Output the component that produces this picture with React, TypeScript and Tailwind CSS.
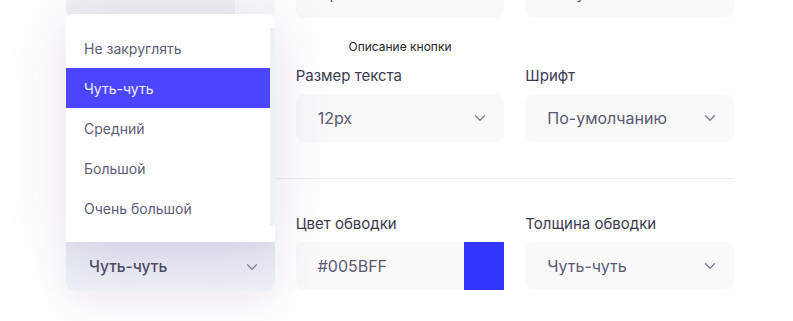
import React from "react";

const Chevron = ({ className = "" }: { className?: string }) => (
  <svg width="12" height="8" viewBox="0 0 12 8" fill="none" className={className}>
    <path d="M1.5 1.75L6 6.25L10.5 1.75" stroke="currentColor" strokeWidth="1.3" strokeLinecap="round" strokeLinejoin="round" />
  </svg>
);

const Select = ({ value }: { value: string }) => (
  <div className="h-12 rounded-lg bg-[#f9f9fa] flex items-center justify-between pl-[22px] pr-[18px]">
    <span className="text-[16px] text-[#5b5a74]">{value}</span>
    <Chevron className="text-[#7d7c92]" />
  </div>
);

const Label = ({ children }: { children: React.ReactNode }) => (
  <div className="h-5 leading-5 text-[15px] text-[#3b3a4f] mb-2">{children}</div>
);

const items = ["Не закруглять", "Чуть-чуть", "Средний", "Большой", "Очень большой"];

export default function App() {
  return (
    <div className="relative w-[793px] h-[321px] overflow-hidden bg-white font-['Inter',sans-serif]">
      <div className="mt-[-30px] ml-[66px] w-[668px]">
        {/* Row A */}
        <div className="grid grid-cols-3 gap-x-[21px]">
          <div className="h-12 flex rounded-b-lg overflow-hidden">
            <div className="flex-1 bg-[#f0f0f3]" />
            <div className="w-10 bg-[#f8f8fa] border-l border-[#fbfbfc]" />
          </div>
          <div className="h-12 rounded-lg bg-[#f9f9fa] flex items-center pl-[22px] overflow-hidden">
            <span className="text-[16px] leading-5 text-[#5b5a74] translate-y-[-1px]">Прямая</span>
          </div>
          <div className="h-12 rounded-lg bg-[#f9f9fa] flex items-center pl-[22px] overflow-hidden">
            <span className="text-[16px] leading-5 text-[#5b5a74] translate-y-[-1px]">По-умолчанию</span>
          </div>
        </div>

        {/* Row B */}
        <div className="grid grid-cols-3 gap-x-[21px] mt-[21px]">
          <div />
          <div className="text-center text-[12px] leading-4 text-[#26252f]">Описание кнопки</div>
          <div />
        </div>

        {/* Row C */}
        <div className="grid grid-cols-3 gap-x-[21px] mt-[11px]">
          <div>
            <div className="h-5 mb-2" />
            <div className="h-12 rounded-lg bg-[#f9f9fa]" />
          </div>
          <div>
            <Label>Размер текста</Label>
            <Select value="12px" />
          </div>
          <div>
            <Label>Шрифт</Label>
            <Select value="По-умолчанию" />
          </div>
        </div>

        <div className="mt-9 h-px bg-[#eceef3]" />

        {/* Row D */}
        <div className="grid grid-cols-3 gap-x-[21px] mt-[35px]">
          <div>
            <div className="h-5 mb-2" />
            <div className="relative">
              <div className="absolute left-0 right-0 bottom-full z-10 h-[228px] bg-white rounded-t-lg py-[14px] shadow-[0_8px_60px_rgba(100,60,130,0.16)]">
                <div className="pr-[5px]">
                  {items.map((it, i) => (
                    <div
                      key={it}
                      className={
                        i === 1
                          ? "h-10 flex items-center pl-[18px] text-[14px] bg-[#4b46fe] text-[#eeeeff]"
                          : "h-10 flex items-center pl-[18px] text-[14px] text-[#5d5c76]"
                      }
                    >
                      {it}
                    </div>
                  ))}
                </div>
                <div className="absolute right-0 top-[14px] w-[5px] h-[197px] bg-[#eef0f5]" />
              </div>
              <div className="h-[49px] rounded-b-lg bg-gradient-to-b from-[#e5e8f1] to-[#eef1f6] flex items-center justify-between pl-[23px] pr-[17px] shadow-[0_12px_40px_rgba(100,60,130,0.10)]">
                <span className="text-[15.5px] font-medium text-[#4d4c66]">Чуть-чуть</span>
                <Chevron className="text-[#85849a]" />
              </div>
            </div>
          </div>
          <div>
            <Label>Цвет обводки</Label>
            <div className="h-12 flex">
              <div className="flex-1 rounded-l-lg bg-[#f9f9fa] flex items-center pl-[22px]">
                <span className="text-[16px] text-[#5b5a74]">#005BFF</span>
              </div>
              <div className="w-10 h-[48px] bg-[#3036ff]" />
            </div>
          </div>
          <div>
            <Label>Толщина обводки</Label>
            <Select value="Чуть-чуть" />
          </div>
        </div>
      </div>
    </div>
  );
}
